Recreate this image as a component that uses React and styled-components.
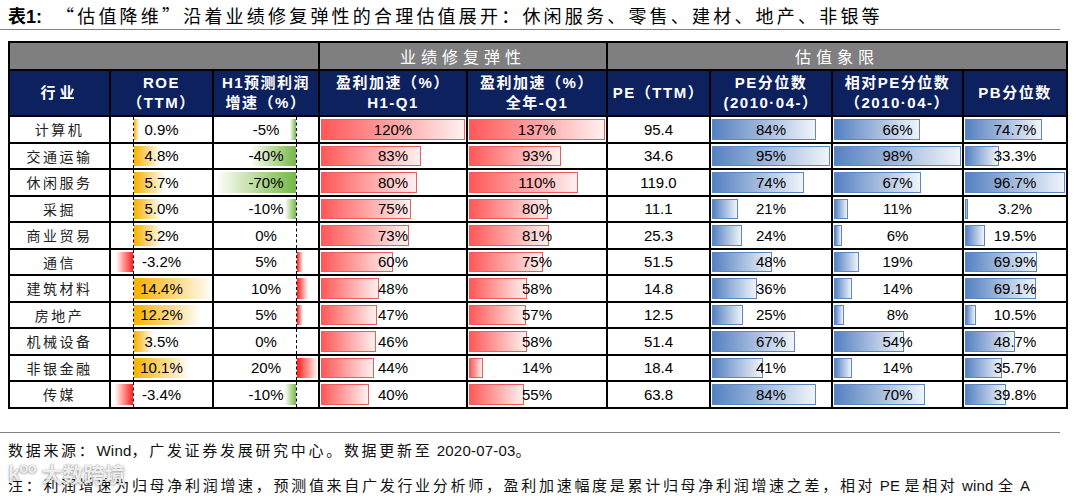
import React from "react";
import styled, { createGlobalStyle } from "styled-components";

const GlobalStyle = createGlobalStyle`
  html, body { margin: 0; padding: 0; background: #fff; }
  body {
    font-family: "Liberation Sans", Arial, "Noto Sans CJK SC", sans-serif;
    color: #000;
  }
`;

const Page = styled.div`
  position: relative;
  width: 1080px;
  height: 496px;
  overflow: hidden;
`;

const TitleBar = styled.div`
  width: 1060px;
  height: 30px;
  box-sizing: border-box;
  padding-left: 8px;
  display: flex;
  align-items: center;
  border-bottom: 1px solid #808080;
  font-size: 18px;
  white-space: nowrap;
`;

const TitleLabel = styled.span`
  font-family: "Liberation Sans", "Noto Sans CJK SC", sans-serif;
  font-weight: bold;
  margin-right: 14px;
`;

const TitleText = styled.span`
  font-family: "Noto Sans CJK SC", sans-serif;
  letter-spacing: 3.2px;
`;

const Grid = styled.div`
  margin: 11px 0 0 8px;
  width: 1060px;
  box-sizing: border-box;
  display: grid;
  grid-template-columns: 99px 101px 104px 146px 138px 101px 120px 129px 102px;
  grid-template-rows: 26px 44px repeat(11, 24.5px);
  gap: 2px;
  padding: 2px;
  background: #000;
`;

const GroupHead = styled.div`
  grid-column: span ${p => p.$span};
  background: #7f7f7f;
  color: #fff;
  display: flex;
  align-items: center;
  justify-content: center;
  font-family: "Noto Sans CJK SC", sans-serif;
  font-size: 16px;
  letter-spacing: 5px;
`;

const HeadCell = styled.div`
  background: #0c215e;
  color: #fff;
  display: flex;
  flex-direction: column;
  align-items: center;
  justify-content: center;
  font-weight: bold;
  font-size: 15px;
  line-height: 20px;
  letter-spacing: ${p => p.$wide ? "4px" : "1.5px"};
  white-space: nowrap;
`;

const Cell = styled.div`
  position: relative;
  background: #fff;
  display: flex;
  align-items: center;
  justify-content: center;
  font-size: 15px;
  white-space: nowrap;
  overflow: hidden;
`;

const NameCell = styled(Cell)`
  font-family: "Noto Sans CJK SC", sans-serif;
  font-size: 14px;
  letter-spacing: 2.5px;
  color: #222;
`;

const Value = styled.span`
  position: relative;
  z-index: 1;
`;

const AxisLine = styled.div`
  position: absolute;
  top: 0;
  bottom: 0;
  left: ${p => p.$at}px;
  border-left: 1px dashed #000;
  z-index: 1;
`;

const AxisBar = styled.div`
  position: absolute;
  top: 2px;
  bottom: 2px;
  background: linear-gradient(
    ${p => (p.$neg ? "to left" : "to right")},
    ${p => p.$color},
    #fffdf8
  );
`;

const DataBar = styled.div`
  position: absolute;
  left: 1px;
  top: 2px;
  bottom: 2px;
  box-sizing: border-box;
  border: 1px solid ${p => p.$edge};
  background: linear-gradient(to right, ${p => p.$from}, ${p => p.$to});
`;

const FooterRule = styled.div`
  width: 1060px;
  margin-top: 23px;
  border-top: 1px solid #808080;
`;

const Notes = styled.div`
  padding-left: 8px;
  font-family: "Liberation Sans", "Noto Sans CJK SC", sans-serif;
  font-size: 15px;
  line-height: 35px;
  letter-spacing: 2.7px;
  color: #111;
  white-space: nowrap;
`;

const Latin = styled.span`
  letter-spacing: 0.2px;
`;

const Watermark = styled.div`
  position: absolute;
  left: 8px;
  top: 458px;
  display: flex;
  align-items: center;
  gap: 6px;
  font-family: "Noto Sans CJK SC", sans-serif;
  font-size: 21px;
  font-weight: bold;
  color: rgba(255, 255, 255, 0.9);
  text-shadow: 0 0 1px rgba(0, 0, 0, 0.45), 0 1px 3px rgba(0, 0, 0, 0.3);
  pointer-events: none;
`;

const Mark = styled.span`
  font-family: "Liberation Sans", sans-serif;
  font-size: 22px;
  letter-spacing: -1px;
`;

const Loops = styled.span`
  font-size: 15px;
  vertical-align: super;
  letter-spacing: -1px;
`;

const RED = { $from: "#ff5858", $to: "#fff0f0", $edge: "#ee5c5c" };
const BLUE = { $from: "#5581c1", $to: "#f0f4fa", $edge: "#5b87c6" };

const rows = [
  ["计算机", 0.9, -5, 120, 137, "95.4", 84, 66, 74.7],
  ["交通运输", 4.8, -40, 83, 93, "34.6", 95, 98, 33.3],
  ["休闲服务", 5.7, -70, 80, 110, "119.0", 74, 67, 96.7],
  ["采掘", 5.0, -10, 75, 80, "11.1", 21, 11, 3.2],
  ["商业贸易", 5.2, 0, 73, 81, "25.3", 24, 6, 19.5],
  ["通信", -3.2, 5, 60, 75, "51.5", 48, 19, 69.9],
  ["建筑材料", 14.4, 10, 48, 58, "14.8", 36, 14, 69.1],
  ["房地产", 12.2, 5, 47, 57, "12.5", 25, 8, 10.5],
  ["机械设备", 3.5, 0, 46, 58, "51.4", 67, 54, 48.7],
  ["非银金融", 10.1, 20, 44, 14, "18.4", 41, 14, 35.7],
  ["传媒", -3.4, -10, 40, 55, "63.8", 84, 70, 39.8],
];

const maxOf = i => Math.max(...rows.map(r => r[i]));

// bars that grow both ways from a dashed axis
const AxisValue = ({ v, text, at, width, scale, pos, neg }) => {
  const len = Math.min(Math.abs(v) * scale, v < 0 ? at : width - at - 1);
  const style = v < 0 ? { left: at - len, width: len } : { left: at + 1, width: len };
  return (
    <Cell>
      {v !== 0 && <AxisBar $neg={v < 0} $color={v < 0 ? neg : pos} style={style} />}
      <AxisLine $at={at} />
      <Value>{text}</Value>
    </Cell>
  );
};

const BarValue = ({ v, max, text, tone }) => (
  <Cell>
    <DataBar {...tone} style={{ width: `calc((100% - 2px) * ${v / max})` }} />
    <Value>{text}</Value>
  </Cell>
);

export default function App() {
  const m3 = maxOf(3), m4 = maxOf(4), m6 = maxOf(6), m7 = maxOf(7), m8 = maxOf(8);
  return (
    <Page>
      <GlobalStyle />
      <TitleBar>
        <TitleLabel>表1:</TitleLabel>
        <TitleText>“估值降维”沿着业绩修复弹性的合理估值展开：休闲服务、零售、建材、地产、非银等</TitleText>
      </TitleBar>

      <Grid>
        <GroupHead $span={3} />
        <GroupHead $span={2}>业绩修复弹性</GroupHead>
        <GroupHead $span={4}>估值象限</GroupHead>

        <HeadCell $wide>行业</HeadCell>
        <HeadCell><span>ROE</span><span>（TTM）</span></HeadCell>
        <HeadCell><span>H1预测利润</span><span>增速（%）</span></HeadCell>
        <HeadCell><span>盈利加速（%）</span><span>H1-Q1</span></HeadCell>
        <HeadCell><span>盈利加速（%）</span><span>全年-Q1</span></HeadCell>
        <HeadCell>PE（TTM）</HeadCell>
        <HeadCell><span>PE分位数</span><span>(2010·04-）</span></HeadCell>
        <HeadCell><span>相对PE分位数</span><span>（2010·04-）</span></HeadCell>
        <HeadCell>PB分位数</HeadCell>

        {rows.map(r => (
          <React.Fragment key={r[0]}>
            <NameCell>{r[0]}</NameCell>
            <AxisValue v={r[1]} text={`${r[1].toFixed(1)}%`} at={22} width={101} scale={5.42} pos="#f6b100" neg="#ff1e1e" />
            <AxisValue v={r[2]} text={`${r[2]}%`} at={82} width={104} scale={1.13} pos="#ff1e1e" neg="#74b844" />
            <BarValue v={r[3]} max={m3} text={`${r[3]}%`} tone={RED} />
            <BarValue v={r[4]} max={m4} text={`${r[4]}%`} tone={RED} />
            <Cell><Value>{r[5]}</Value></Cell>
            <BarValue v={r[6]} max={m6} text={`${r[6]}%`} tone={BLUE} />
            <BarValue v={r[7]} max={m7} text={`${r[7]}%`} tone={BLUE} />
            <BarValue v={r[8]} max={m8} text={`${r[8].toFixed(1)}%`} tone={BLUE} />
          </React.Fragment>
        ))}
      </Grid>

      <FooterRule />
      <Notes>
        <div>数据来源：<Latin>Wind</Latin>，广发证券发展研究中心。数据更新至<Latin> 2020-07-03</Latin>。</div>
        <div>注：利润增速为归母净利润增速，预测值来自广发行业分析师，盈利加速幅度是累计归母净利润增速之差，相对<Latin> PE </Latin>是相对<Latin> wind </Latin>全<Latin> A</Latin></div>
      </Notes>

      <Watermark>
        <Mark>k<Loops>oo</Loops></Mark>
        <span>大数跨境</span>
      </Watermark>
    </Page>
  );
}
